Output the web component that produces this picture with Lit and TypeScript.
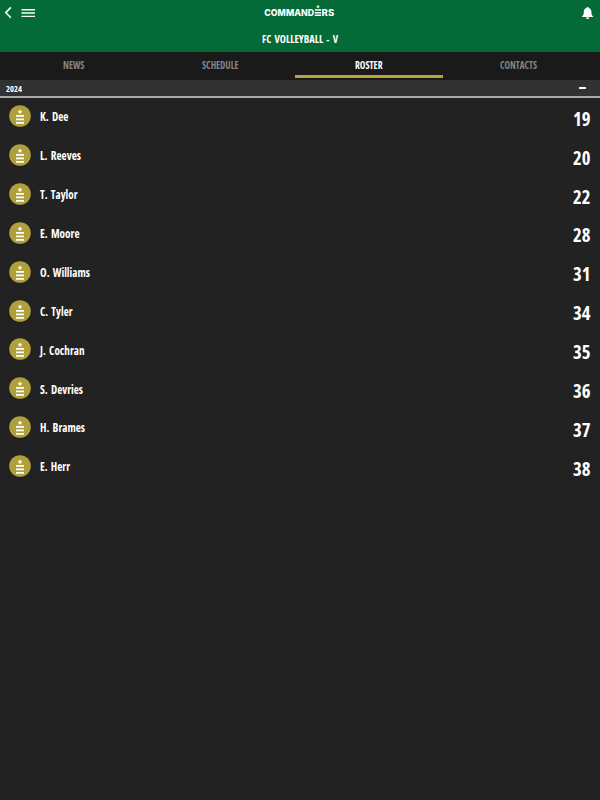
import { LitElement, html, css, svg } from "lit";
import { customElement, property } from "lit/decorators.js";

const TABS = [
  { label: "NEWS", width: 21.5 },
  { label: "SCHEDULE", width: 36.5 },
  { label: "ROSTER", width: 27.5 },
  { label: "CONTACTS", width: 37 },
];

const PLAYERS = [
  { name: "K. Dee", num: "19", width: 28.5 },
  { name: "L. Reeves", num: "20", width: 41 },
  { name: "T. Taylor", num: "22", width: 37.5 },
  { name: "E. Moore", num: "28", width: 39.5 },
  { name: "O. Williams", num: "31", width: 50 },
  { name: "C. Tyler", num: "34", width: 32.5 },
  { name: "J. Cochran", num: "35", width: 44.5 },
  { name: "S. Devries", num: "36", width: 43 },
  { name: "H. Brames", num: "37", width: 45 },
  { name: "E. Herr", num: "38", width: 30 },
];

/** One line of condensed type set to a fixed measure. */
@customElement("condensed-text")
class CondensedText extends LitElement {
  @property() text = "";
  @property({ type: Number }) size = 11;
  @property({ type: Number }) measure = 40;

  static styles = css`
    :host { display: block; flex: none; }
    svg { display: block; overflow: visible; }
    text {
      font-family: "Open Sans", "Noto Sans", sans-serif;
      font-weight: 700;
      font-stretch: 75%;
      word-spacing: 1.3px;
      fill: currentColor;
    }
  `;

  render() {
    const h = Math.round(this.size * 1.2);
    return html`<svg width=${this.measure} height=${h}>
      ${svg`<text x="0" y=${h / 2 + this.size * 0.357} font-size=${this.size}
        textLength=${this.measure} lengthAdjust="spacingAndGlyphs">${this.text}</text>`}
    </svg>`;
  }
}

@customElement("team-badge")
class TeamBadge extends LitElement {
  static styles = css`
    :host { display: block; width: 22px; height: 22px; flex: none; }
    svg { display: block; }
    .disc { fill: #b0a03b; }
    .mark { fill: #fff; }
  `;

  render() {
    return html`<svg width="22" height="22" viewBox="0 0 22 22">
      <circle class="disc" cx="11" cy="11" r="10.8" />
      <path class="mark" d="M11 4.400l.7 1.400 1.600.2-1.150 1.100.3 1.600L11 8l-1.450.7.3-1.600L8.700 6l1.600-.2z" />
      <path class="mark" d="M7 10.100h8v1.700H7zM7 13.500h8v1.700H7zM7 17h8v1.700H7z" />
    </svg>`;
  }
}

@customElement("app-root")
class AppRoot extends LitElement {
  static styles = css`
    :host {
      display: block;
      width: 600px;
      height: 800px;
      overflow: hidden;
      background: #222;
      color: #fff;
    }
    header {
      box-sizing: border-box;
      height: 52px;
      background: #046a38;
    }
    .bar {
      display: flex;
      justify-content: space-between;
      height: 26px;
      padding: 0 6px 0 4px;
    }
    .bar svg { display: block; }
    .side { width: 60px; }
    .side.end { display: flex; justify-content: flex-end; }
    .brand {
      font: 800 9px "Inter", "Open Sans", sans-serif;
      fill: #fff;
    }
    .title { display: flex; justify-content: center; padding-top: 7px; }
    nav {
      display: grid;
      grid-template-columns: 147.5px 147.5px 148px 157px;
      height: 28px;
      background: #1a1a1a;
    }
    .tab {
      display: flex;
      flex-direction: column;
      align-items: center;
      justify-content: space-between;
      box-sizing: border-box;
      padding: 7px 0 2.5px;
      color: #858585;
    }
    .tab:nth-child(2) { padding-right: 2.5px; }
    .tab:last-child { padding-right: 6px; }
    .tab.active { color: #fff; }
    .rule { width: 100%; height: 2.5px; }
    .active .rule { background: #b5a33a; }
    .season {
      display: flex;
      align-items: center;
      justify-content: space-between;
      box-sizing: border-box;
      height: 18px;
      padding: 0 14px 0 6px;
      background: #323232;
      border-bottom: 2px solid #aaa;
    }
    .minus { width: 7px; height: 2px; margin-bottom: 1px; background: #fff; border-radius: 0.5px; }
    .row {
      display: flex;
      align-items: center;
      box-sizing: border-box;
      height: 38.9px;
      padding: 0 10px 1.6px 9px;
      border-bottom: 1px solid #202020;
    }
    .name { margin-left: 9px; flex: 1; padding-top: 2.4px; }
    .num { padding-top: 6.2px; }
  `;

  render() {
    return html`
      <header>
        <div class="bar">
          <svg class="side" width="60" height="26" viewBox="4 0 60 26">
            <path d="M10.8 7.4L5.8 12.6l5 5.2" fill="none" stroke="#fff" stroke-width="1.6" />
            <path d="M21.500 9h13.500v1.400H21.500zM21.500 12.300h13.500v1.400H21.500zM21.500 15.700h13.500v1.400H21.500z" fill="#fff" />
          </svg>
          <svg width="72" height="26" viewBox="263 0 72 26">
            <text class="brand" x="264.3" y="16" textLength="49.7" lengthAdjust="spacingAndGlyphs">COMMAND</text>
            <path d="M314.800 9.300h6.200v1.500h-6.200zM314.800 11.900h6.200v1.500h-6.200zM314.800 14.500h6.200V16h-6.200z" fill="#fff" />
            <path d="M318 4.600l.6 1.200 1.300.2-.9 1 .2 1.300-1.200-.6-1.200.6.2-1.300-.9-1 1.300-.2z" fill="#dcdca0" />
            <text class="brand" x="321.600" y="16" textLength="12.600" lengthAdjust="spacingAndGlyphs">RS</text>
          </svg>
          <div class="side end">
            <svg width="12" height="26" viewBox="582 0 12 26">
              <path d="M587.6 7c.7 0 1 .4 1.1.9 2 .5 2.7 2 2.7 4 0 2.500.6 3.600 1.800 4.700v.5h-11.200v-.5c1.200-1.100 1.800-2.200 1.800-4.700 0-2 .7-3.500 2.700-4 .1-.5.4-.9 1.100-.9zM586 17.500h3.200c-.1 1-.7 1.500-1.600 1.500s-1.500-.5-1.600-1.500z" fill="#fff" />
            </svg>
          </div>
        </div>
        <div class="title"><condensed-text text="FC VOLLEYBALL - V" size="10" measure="76"></condensed-text></div>
      </header>
      <nav>
        ${TABS.map((t) => html`
          <div class="tab ${t.label === "ROSTER" ? "active" : ""}">
            <condensed-text text=${t.label} size="10.2" measure=${t.width}></condensed-text>
            <div class="rule"></div>
          </div>`)}
      </nav>
      <div class="season">
        <condensed-text text="2024" size="9" measure="16"></condensed-text>
        <div class="minus"></div>
      </div>
      <main>
        ${PLAYERS.map((p) => html`
          <div class="row">
            <team-badge></team-badge>
            <condensed-text class="name" text=${p.name} size="11.5" measure=${p.width}></condensed-text>
            <condensed-text class="num" text=${p.num} size="19.5" measure="17.5"></condensed-text>
          </div>`)}
      </main>
    `;
  }
}
